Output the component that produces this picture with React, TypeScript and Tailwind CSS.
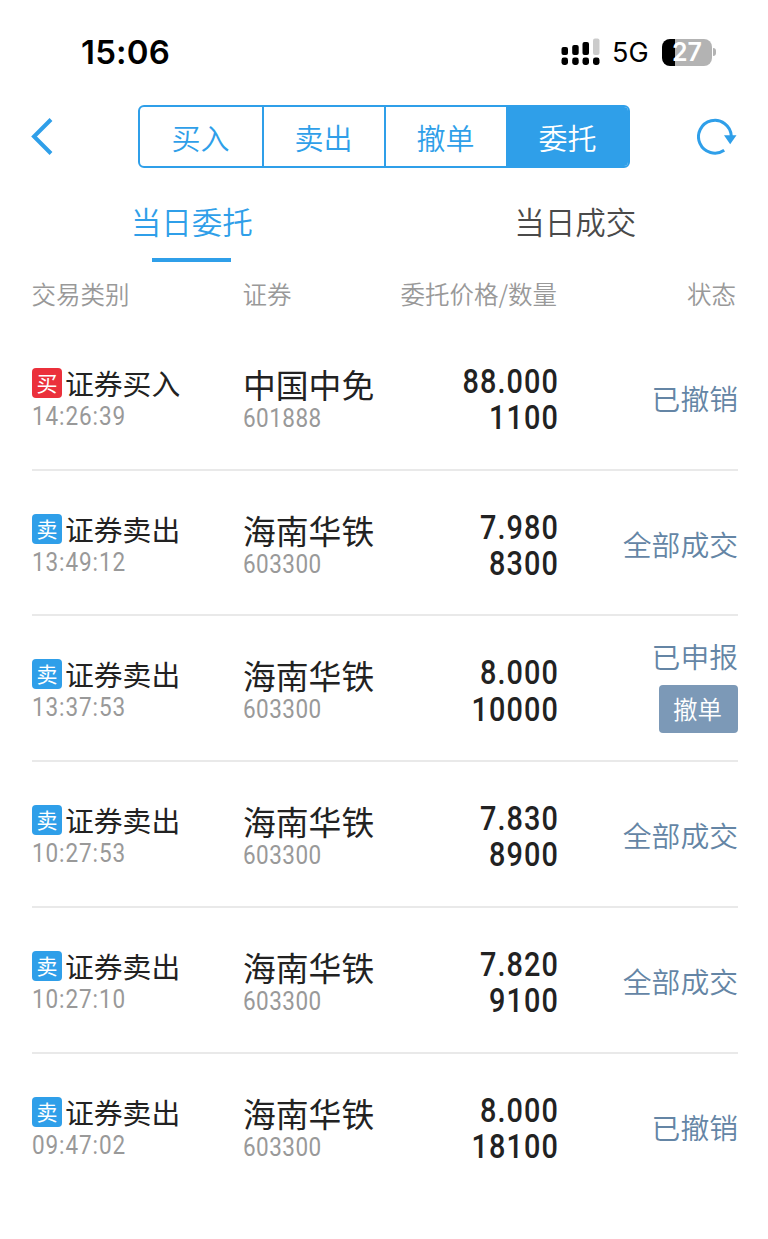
import clsx from "clsx"

type Side = "buy" | "sell"

interface Order {
  side: Side
  time: string
  name: string
  code: string
  price: string
  amount: string
  status: string
  cancellable?: boolean
}

const ACTIONS = ["买入", "卖出", "撤单", "委托"] as const

const ORDERS: Order[] = [
  { side: "buy", time: "14:26:39", name: "中国中免", code: "601888", price: "88.000", amount: "1100", status: "已撤销" },
  { side: "sell", time: "13:49:12", name: "海南华铁", code: "603300", price: "7.980", amount: "8300", status: "全部成交" },
  { side: "sell", time: "13:37:53", name: "海南华铁", code: "603300", price: "8.000", amount: "10000", status: "已申报", cancellable: true },
  { side: "sell", time: "10:27:53", name: "海南华铁", code: "603300", price: "7.830", amount: "8900", status: "全部成交" },
  { side: "sell", time: "10:27:10", name: "海南华铁", code: "603300", price: "7.820", amount: "9100", status: "全部成交" },
  { side: "sell", time: "09:47:02", name: "海南华铁", code: "603300", price: "8.000", amount: "18100", status: "已撤销" },
]

function StatusBar() {
  return (
    <div className="flex h-[104.5px] items-start justify-between pt-[31px] pr-[52px] pl-[81px] font-['Inter',sans-serif] text-black">
      <span className="text-[33px] leading-[42px] font-semibold tracking-[0.2px]">15:06</span>
      <div className="flex h-[42px] items-center">
        <svg width="39" height="28" viewBox="0 0 39 28" className="mr-[12px]">
          <rect x="0.5" y="9" width="6.5" height="8" rx="2" />
          <rect x="11.2" y="7" width="6.5" height="10" rx="2" />
          <rect x="21.5" y="4" width="6.5" height="13" rx="2" />
          <rect x="32" y="0.5" width="6.5" height="16.5" rx="2" fill="#cbcbcb" />
          <rect x="0.5" y="19.5" width="6.5" height="7.5" rx="2.4" />
          <rect x="11.2" y="19.5" width="6.5" height="7.5" rx="2.4" />
          <rect x="21.5" y="19.5" width="6.5" height="7.5" rx="2.4" />
          <rect x="32" y="19.5" width="6.5" height="7.5" rx="2.4" />
        </svg>
        <span className="mr-3 w-[38px] pt-[2px] text-[27px] tracking-[0.1px] whitespace-nowrap">5G</span>
        <div className="flex h-[27px] w-[50px] items-center justify-center rounded-[8px] bg-[linear-gradient(to_right,#000_13.5px,#b3b3b3_13.5px)] text-[25px] leading-none font-semibold text-white">
          27
        </div>
        <div className="ml-[1px] h-2 w-[3px] rounded-r-full bg-[#b3b3b3]" />
      </div>
    </div>
  )
}

function NavBar() {
  return (
    <div className="flex h-[63px] items-center justify-between pr-[31px] pl-[31px] text-[#2f9fe9]">
      <svg width="22" height="38" viewBox="0 0 22 38" fill="none" stroke="currentColor" strokeWidth="4">
        <path d="M20 2.5 3 19.5 20 36.5" />
      </svg>
      <div className="ml-[17px] flex h-[63px] w-[492px] overflow-hidden rounded-[6px] border-2 border-[#2f9fe9]">
        {ACTIONS.map((label, i) => (
          <button
            key={label}
            className={clsx(
              "w-[122px] shrink-0 pt-[3px] text-[29px] font-[350]",
              i > 0 && "border-l-2 border-[#2f9fe9]",
              i === 3 && "bg-[#2f9fe9] text-white",
            )}
          >
            {label}
          </button>
        ))}
      </div>
      <svg width="40" height="38" viewBox="0 0 40 38" fill="none">
        <path d="M27.2 33.3A16.4 16.4 0 1 1 34.3 19" stroke="currentColor" strokeWidth="3" />
        <path d="M27 18.2H39.5L33.2 27.2Z" fill="currentColor" />
      </svg>
    </div>
  )
}

function OrderRow({ order }: { order: Order }) {
  const isBuy = order.side === "buy"

  return (
    <div className="grid h-[145.8px] grid-cols-[211px_150px_166px_1fr] border-b-2 border-[#e9e9e9] last:border-transparent">
      <div className="pt-[43px]">
        <div className="flex h-[30px] items-center">
          <span
            className={clsx(
              "flex size-[30px] items-center justify-center rounded-[4px] pb-[1px] text-[21px] leading-none text-white",
              isBuy ? "bg-[#eb303b]" : "bg-[#2f9fe9]",
            )}
          >
            {isBuy ? "买" : "卖"}
          </span>
          <span className="ml-[3px] text-[28.8px] leading-[30px] text-[#222]">
            {isBuy ? "证券买入" : "证券卖出"}
          </span>
        </div>
        <div className="mt-1 origin-left scale-x-90 font-['Roboto',sans-serif] text-[25px] leading-[30px] font-[450] tracking-[1px] text-[#999]">
          {order.time}
        </div>
      </div>
      <div className="pt-[42px]">
        <div className="text-[32.8px] leading-[34px] whitespace-nowrap text-[#222]">{order.name}</div>
        <div className="mt-[3px] origin-left scale-x-90 font-['Roboto',sans-serif] text-[25px] leading-[30px] font-[450] tracking-[0.5px] text-[#999]">
          {order.code}
        </div>
      </div>
      <div className="origin-right scale-x-[0.86] pt-[39px] text-right font-['Roboto',sans-serif] text-[33.5px] leading-[36.2px] font-medium tracking-[1.3px] text-[#222]">
        <div>{order.price}</div>
        <div>{order.amount}</div>
      </div>
      <div className={clsx("flex flex-col items-end text-[28.8px] font-[350] text-[#6485a5]", order.cancellable ? "pt-[20.5px]" : "pt-[54px]")}>
        <span className="leading-[38px]">{order.status}</span>
        {order.cancellable && (
          <button className="mt-[10px] h-12 w-[79px] rounded-[4px] bg-[#7c99b7] pr-[2px] text-[24.5px] leading-none text-white">
            撤单
          </button>
        )}
      </div>
    </div>
  )
}

export default function App() {
  return (
    <div className="h-[1239px] w-[768px] overflow-hidden bg-white font-['Noto_Sans_CJK_SC',sans-serif]">
      <StatusBar />
      <NavBar />

      {/* Tabs */}
      <div className="grid h-[94.5px] w-[767px] grid-cols-2 text-center text-[30.5px] font-[350]">
        <div className="flex flex-col items-center pt-[33.5px] text-[#2f9fe9]">
          <span className="leading-10">当日委托</span>
          <span className="mt-[17px] h-1 w-[79px] bg-[#2f9fe9]" />
        </div>
        <div className="pt-[33.5px] leading-10 text-[#4a4a4a]">当日成交</div>
      </div>

      {/* Table head */}
      <div className="grid h-[62.8px] grid-cols-[211px_100px_214.5px_1fr] pt-4 pr-8 pl-[31.5px] text-[24.5px] leading-[32px] font-[350] text-[#999]">
        <span>交易类别</span>
        <span>证券</span>
        <span className="text-right">委托价格/数量</span>
        <span className="text-right">状态</span>
      </div>

      <div className="mr-[30px] ml-8">
        {ORDERS.map((order) => (
          <OrderRow key={order.time} order={order} />
        ))}
      </div>
    </div>
  )
}
